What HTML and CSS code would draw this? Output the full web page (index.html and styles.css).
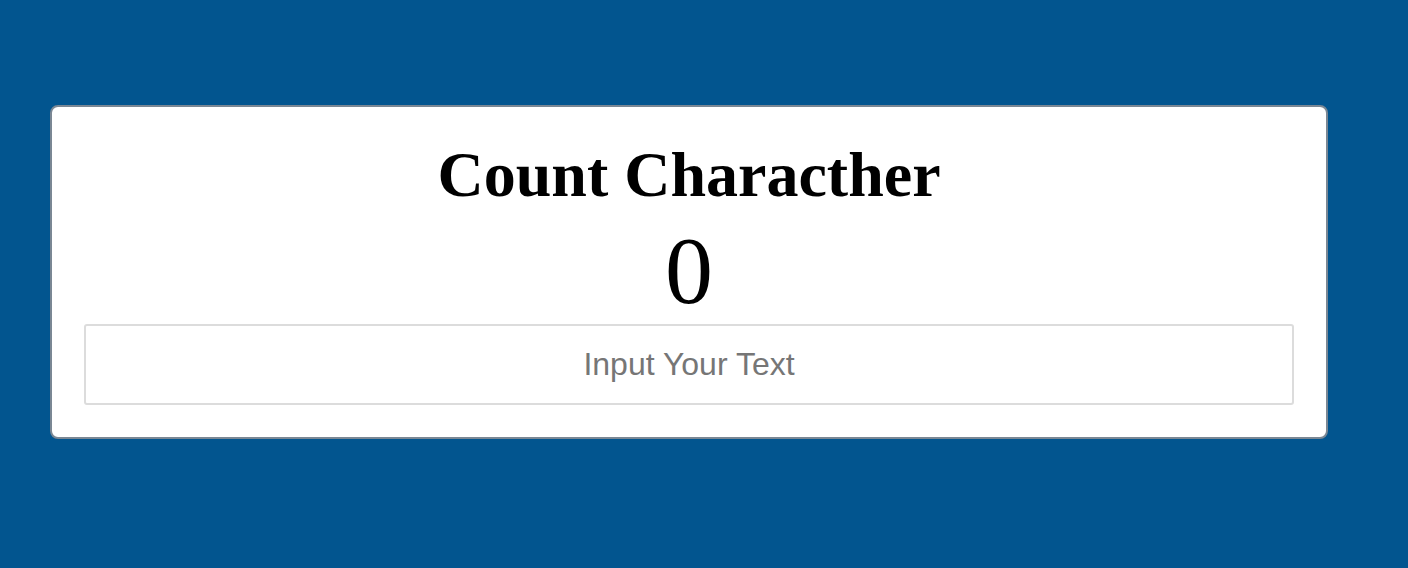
FILE: index.html
```html
<!DOCTYPE html>
<html>
<head>
<meta charset="utf-8">
<link rel="stylesheet" href="styles.css">
</head>
<body>
<div class="card">
  <h1 class="title">Count Characther</h1>
  <div class="count">0</div>
  <input class="field" type="text" placeholder="Input Your Text">
</div>
</body>
</html>
```
FILE: styles.css
```css
html, body {
  margin: 0;
  padding: 0;
}
body {
  background: #02558f;
  font-family: "Liberation Serif", "Times New Roman", serif;
  padding-top: 105px;
  height: 568px;
  box-sizing: border-box;
}
.card {
  margin-left: 50px;
  width: 1278px;
  box-sizing: border-box;
  background: #fff;
  border: 2px solid #7a8794;
  border-radius: 8px;
  padding: 0 32px 32px 32px;
  display: flex;
  flex-direction: column;
  align-items: center;
}
.title {
  margin: 0;
  padding-top: 31px;
  font-size: 64px;
  font-weight: bold;
  line-height: 74px;
  color: #000;
}
.count {
  margin-top: 11px;
  font-size: 96px;
  line-height: 96px;
  height: 101px;
  color: #000;
}
.field {
  width: 100%;
  box-sizing: border-box;
  height: 81px;
  border: 2px solid #dcdcdc;
  border-radius: 3px;
  text-align: center;
  font-family: "Liberation Sans", Arial, sans-serif;
  font-size: 32px;
  color: #333;
  outline: none;
}
.field::placeholder {
  color: #767676;
}
```
